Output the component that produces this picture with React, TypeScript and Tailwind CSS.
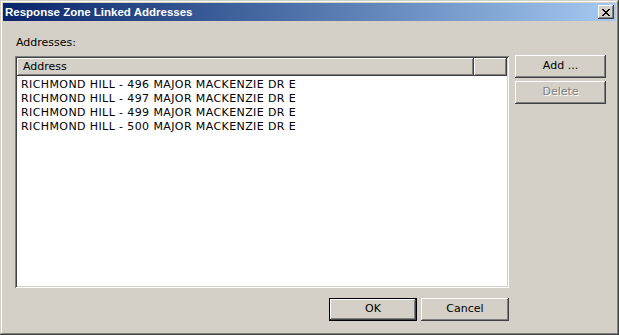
import React from 'react';

const font = { fontFamily: '"DejaVu Sans", Verdana, sans-serif' };

const rows = [
  'RICHMOND HILL - 496 MAJOR MACKENZIE DR E',
  'RICHMOND HILL - 497 MAJOR MACKENZIE DR E',
  'RICHMOND HILL - 499 MAJOR MACKENZIE DR E',
  'RICHMOND HILL - 500 MAJOR MACKENZIE DR E',
];

const raised =
  'shadow-[inset_-1px_-1px_#404040,inset_1px_1px_#ffffff,inset_-2px_-2px_#808080,inset_2px_2px_#d4d0c8]';

const Button = ({ label, w, h, disabled, isDefault }: { label: string; w: string; h: string; disabled?: boolean; isDefault?: boolean }) => (
  <div
    className={`${w} ${h} bg-[#d4d0c8] flex items-center justify-center text-[11px] ${
      isDefault
        ? 'shadow-[inset_0_0_0_1px_#000000,inset_-2px_-2px_#404040,inset_2px_2px_#ffffff,inset_-3px_-3px_#808080]'
        : raised
    }`}
  >
    {disabled ? (
      <span className="text-[#808080] [text-shadow:1px_1px_0_#ffffff]">{label}</span>
    ) : (
      <span className="text-black">{label}</span>
    )}
  </div>
);

export default function App() {
  return (
    <div
      className="w-[619px] h-[335px] bg-[#d4d0c8] p-[3px] flex flex-col shadow-[inset_-1px_-1px_#404040,inset_1px_1px_#d4d0c8,inset_-2px_-2px_#808080,inset_2px_2px_#ffffff]"
      style={font}
    >
      {/* title bar */}
      <div className="h-[18px] bg-gradient-to-r from-[#0a246a] to-[#a6caf0] flex items-center justify-between pl-[2px] pr-[2px]">
        <span className="text-white font-bold text-[11.5px] leading-[13px] font-['Liberation_Sans',Arial,sans-serif]">
          Response Zone Linked Addresses
        </span>
        <div className={`w-[16px] h-[14px] bg-[#d4d0c8] ${raised} flex items-center justify-center`}>
          <svg width="8" height="7" viewBox="0 0 8 7" shapeRendering="crispEdges">
            <path
              d="M0 0h2v1h-2zM6 0h2v1h-2zM1 1h2v1h-2zM5 1h2v1h-2zM2 2h4v1h-4zM3 3h2v1h-2zM2 4h4v1h-4zM1 5h2v1h-2zM5 5h2v1h-2zM0 6h2v1h-2zM6 6h2v1h-2z"
              fill="#000"
            />
          </svg>
        </div>
      </div>

      {/* body */}
      <div className="flex-1 flex flex-col pl-[12px] pt-[15px]">
        <div className="text-[11px] leading-[13px] text-black ml-[1px]">Addresses:</div>
        <div className="flex mt-[7px]">
          <div className="w-[494px] h-[232px] bg-white p-[2px] shadow-[inset_1px_1px_#808080,inset_-1px_-1px_#ffffff,inset_2px_2px_#404040,inset_-2px_-2px_#d4d0c8] flex flex-col">
            <div className="flex h-[18px]">
              <div className={`w-[457px] h-full ${raised} bg-[#d4d0c8] flex items-center pl-[6px] text-[11px] text-black`}>
                Address
              </div>
              <div className={`flex-1 h-full ${raised} bg-[#d4d0c8]`} />
            </div>
            <div className="flex flex-col pt-[2px] pl-[4px]">
              {rows.map((r, i) => (
                <div key={i} className="h-[14px] leading-[14px] text-[11px] tracking-[0.4px] text-black whitespace-nowrap">
                  {r}
                </div>
              ))}
            </div>
          </div>
          <div className="flex flex-col ml-[6px] -mt-[1px] gap-[3px]">
            <Button label="Add ..." w="w-[91px]" h="h-[23px]" />
            <Button label="Delete" w="w-[91px]" h="h-[23px]" disabled />
          </div>
        </div>
        <div className="w-[494px] flex justify-end gap-[4px] mt-[10px]">
          <Button label="OK" w="w-[88px]" h="h-[23px]" isDefault />
          <Button label="Cancel" w="w-[88px]" h="h-[23px]" />
        </div>
      </div>
    </div>
  );
}
